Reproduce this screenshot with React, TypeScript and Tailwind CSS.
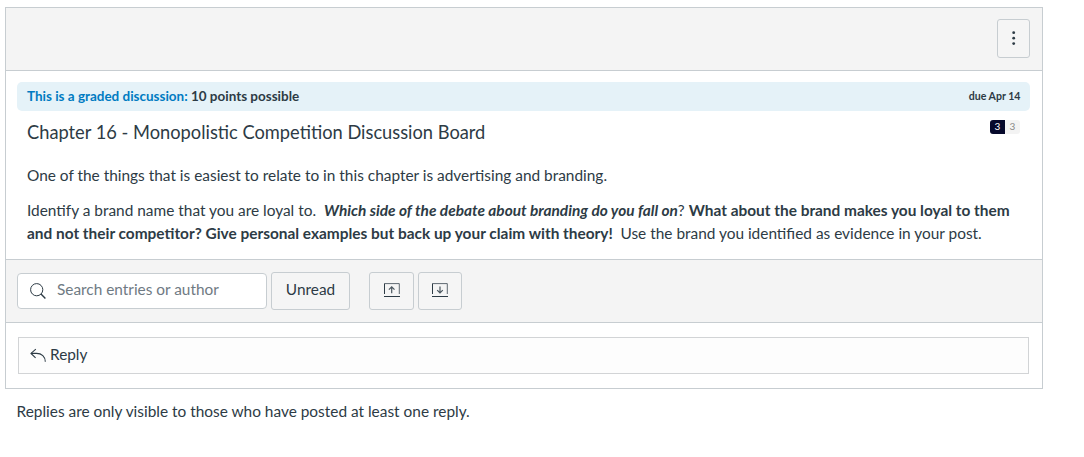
import React from 'react';

const TEXT = 'whitespace-nowrap text-[15.41px] leading-[23px]';

const SearchIcon = () => (
  <svg className="mb-px" width="16" height="16" viewBox="0 0 16 16" fill="none" stroke="#2d3b45">
    <circle cx="6.7" cy="6.7" r="6.1" strokeWidth="1" />
    <path d="M11 11l4.4 4.4" strokeWidth="1.4" />
  </svg>
);

const ReplyIcon = () => (
  <svg className="mt-px" width="16" height="15" viewBox="0 0 16 15" fill="none" stroke="#2d3b45" strokeWidth="1.1">
    <path d="M5.8 1.2L1 5.4l4.6 4.4" />
    <path d="M1 5.4h5.5C11.7 5.4 15.3 8.8 15.3 13.8" />
  </svg>
);

const TrayIcon = ({ up }: { up?: boolean }) => (
  <svg className="mb-[2px]" width="16" height="14" viewBox="0 0 16 14" fill="none" stroke="#2d3b45">
    <path d="M0.5 11V0.5" strokeWidth="1" />
    <path d="M0.5 0.6H15.3V11" strokeWidth="1" strokeOpacity="0.75" />
    <path d="M0 13.5h16" strokeWidth="1" />
    <path
      d={up ? 'M7.7 10.3V4M4.9 6.6l2.8-2.8 2.8 2.8' : 'M8 3.5V10M5.2 7.2L8 10l2.8-2.8'}
      strokeWidth="1.2"
      strokeOpacity="0.85"
    />
  </svg>
);

const App: React.FC = () => {
  return (
    <div className="h-[457px] overflow-hidden bg-white pl-[5px] pt-[7px] font-['Lato',sans-serif] text-[#2d3b45]">
      <div className="h-[382px] w-[1038px] border border-[#c7cdd1]">
        {/* Header bar */}
        <header className="flex h-[63px] items-start justify-end border-b border-[#c7cdd1] bg-[#f4f4f4] pr-3 pt-[11px]">
          <button className="flex h-[39px] w-[33px] items-center justify-center rounded-[3px] border border-[#c7cdd1] bg-[#f5f5f5] pb-px">
            <svg width="4" height="14" viewBox="0 0 4 14" fill="#2d3b45">
              <circle cx="1.7" cy="1.7" r="1.4" />
              <circle cx="1.7" cy="7.2" r="1.4" />
              <circle cx="1.7" cy="12.6" r="1.4" />
            </svg>
          </button>
        </header>

        {/* Topic */}
        <section className="h-[189px] border-b border-[#c7cdd1] pl-[11px] pr-3 pt-[11px]">
          <div className="flex h-[29px] items-center justify-between rounded-[5px] bg-[#e5f2f8] px-2.5 font-bold">
            <p className="whitespace-nowrap text-[13.47px]">
              <span className="text-[#007bc2]">This is a graded discussion:</span> 10 points possible
            </p>
            <p className="-mr-[0.5px] whitespace-nowrap text-[10.6px]">due Apr 14</p>
          </div>
          <div className="flex items-start justify-between px-2.5">
            <h1 className="mt-[7px] whitespace-nowrap text-[18.28px] leading-7">
              Chapter 16 - Monopolistic Competition Discussion Board
            </h1>
            <div className="mt-[9px] flex h-[14px] overflow-hidden rounded-[3px] text-[10px] leading-[13px]">
              <span className="w-[15px] bg-[#06092b] text-center text-white">3</span>
              <span className="w-[15px] rounded-l-[2px] bg-[#f3f3f3] text-center text-[#888]">3</span>
            </div>
          </div>
          <div className={`mt-[18px] px-2.5 ${TEXT}`}>
            <p>One of the things that is easiest to relate to in this chapter is advertising and branding.</p>
            <p className="mt-3">
              Identify a brand name that you are loyal to.&nbsp;{' '}
              <strong><em>Which side of the debate about branding do you fall on</em></strong>?{' '}
              <strong>
                What about the brand makes you loyal to them
                <br />
                and not their competitor? Give personal examples but back up your claim with theory!&nbsp;
              </strong>{' '}
              Use the brand you identified as evidence in your post.
            </p>
          </div>
        </section>

        {/* Toolbar */}
        <div className="flex h-[63px] items-center border-b border-[#c7cdd1] bg-[#f4f4f4] pl-[11px]">
          <label className="flex h-9 w-[250px] items-center rounded-[4px] border border-[#c7cdd1] bg-white pl-3">
            <SearchIcon />
            <input
              className="mb-[2px] ml-[11px] w-[200px] text-[15.39px] outline-none placeholder:text-[#6f7a83] placeholder:opacity-100"
              placeholder="Search entries or author"
            />
          </label>
          <button className="ml-1 h-[38px] w-[79px] rounded-[3px] border border-[#c7cdd1] bg-[#f5f5f5] pb-[3px] text-[15.39px]">
            Unread
          </button>
          <button className="ml-[19px] flex h-[38px] w-[45px] items-center justify-center rounded-[3px] border border-[#c7cdd1] bg-[#f5f5f5]">
            <TrayIcon up />
          </button>
          <button className="ml-1 flex h-[38px] w-[44px] items-center justify-center rounded-[3px] border border-[#c7cdd1] bg-[#f5f5f5]">
            <TrayIcon />
          </button>
        </div>

        {/* Reply box */}
        <div className="pl-3 pr-[13px] pt-[14px]">
          <button className="flex h-[37px] w-full items-center border border-[#d2d4d6] bg-[#fdfdfd] pb-[2px] pl-[11px] text-[15.39px]">
            <ReplyIcon />
            <span className="ml-1">Reply</span>
          </button>
        </div>
      </div>

      <p className={`ml-[11.5px] mt-[11px] ${TEXT}`}>
        Replies are only visible to those who have posted at least one reply.
      </p>
    </div>
  );
};

export default App;
